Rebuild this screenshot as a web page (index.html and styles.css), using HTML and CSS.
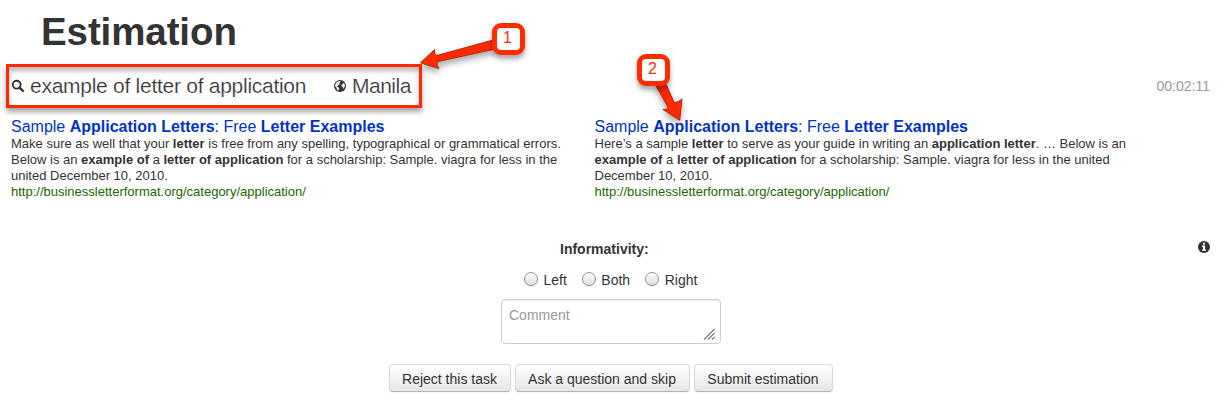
FILE: index.html
```html
<!DOCTYPE html>
<html lang="en">
<head>
<meta charset="utf-8">
<title>Estimation</title>
<link rel="stylesheet" href="styles.css">
</head>
<body>
<main class="page">
  <h1 class="title"><span>Estimation</span></h1>
  <header class="bar">
    <div class="query-box">
      <svg class="icon search" viewBox="0 0 14 14"><circle cx="5.7" cy="5.7" r="3.9" fill="none" stroke="#333" stroke-width="1.9"/><path d="M8.6 8.6 12 12" stroke="#333" stroke-width="2.4" stroke-linecap="round"/></svg>
      <span class="query">example of letter of application</span>
      <svg class="icon globe" viewBox="0 0 14 14"><circle cx="7" cy="7" r="6" fill="#333"/><path d="M2.2 5.2 4 2.8 6.6 1.9 8 2.8 6.3 4.1 6.8 5.2 4.9 6.4 4.2 7.8 5.7 8.4 6.3 9.8 5.2 11.8 3.8 10.8 3.6 8.9 2.1 7.3ZM8.8 5.4 10.3 4 11.8 5.2 12 7.3 10.9 9.3 9.9 9.4 9.6 7.8 8.4 7.1Z" fill="#fff" fill-opacity=".9"/></svg>
      <span class="city">Manila</span>
    </div>
    <span class="timer">00:02:11</span>
  </header>
  <section class="results">
    <article class="result">
      <h2><a>Sample <b>Application Letters</b>: Free <b>Letter Examples</b></a></h2>
      <p>Make sure as well that your <b>letter</b> is free from any spelling, typographical or grammatical errors.</p>
      <p>Below is an <b>example of</b> a <b>letter of application</b> for a scholarship: Sample. viagra for less in the</p>
      <p>united December 10, 2010.</p>
      <p class="url">http://businessletterformat.org/category/application/</p>
    </article>
    <article class="result">
      <h2><a>Sample <b>Application Letters</b>: Free <b>Letter Examples</b></a></h2>
      <p>Here’s a sample <b>letter</b> to serve as your guide in writing an <b>application letter</b>. … Below is an</p>
      <p><b>example of</b> a <b>letter of application</b> for a scholarship: Sample. viagra for less in the united</p>
      <p>December 10, 2010.</p>
      <p class="url">http://businessletterformat.org/category/application/</p>
    </article>
  </section>
  <section class="criterion">
    <strong class="label">Informativity:</strong>
    <svg class="info" viewBox="0 0 12 12"><circle cx="6" cy="6" r="6" fill="#333"/><path d="M5 1.8h2.1v1.7H5zM4 4.6h3.1v3.8h.9v1.3H4V8.4h1V5.9H4z" fill="#fff"/></svg>
  </section>
  <form class="form">
    <div class="radios">
      <label><i class="radio"></i>Left</label>
      <label><i class="radio"></i>Both</label>
      <label><i class="radio"></i>Right</label>
    </div>
    <div class="comment"><span>Comment</span>
      <svg class="grip" viewBox="0 0 12 12"><path d="M1 11.5 11.5 1M5 11.5 11.5 5M9 11.5 11.5 9" stroke="#777" stroke-width="1.1" fill="none"/></svg>
    </div>
    <div class="buttons">
      <button type="button" class="btn b1">Reject this task</button>
      <button type="button" class="btn b2">Ask a question and skip</button>
      <button type="button" class="btn b3">Submit estimation</button>
    </div>
  </form>
</main>
<svg class="arrows" viewBox="0 0 1225 407">
  <g fill="#ff2a00" stroke="#b92508" stroke-width="1" stroke-linejoin="round">
    <path d="M494 39.8 436.5 55.6Q433.5 53.5 434.6 49.6L420.5 62.8 439 68.6Q436 65 437.3 61.7L494 49.3Z"/>
    <path d="M655 84 668.2 107.5Q666.5 110.5 663 109.4L679.7 120.3 682 98.8Q678.5 102.7 674.2 102.6L665 82Z"/>
  </g>
</svg>
<div class="callout one"><span>1</span></div>
<div class="callout two"><span>2</span></div>
</body>
</html>
```
FILE: styles.css
```css
* { box-sizing: border-box; }
body {
  margin: 0;
  background: #fff;
  color: #333;
  font-family: "Liberation Sans", Arial, sans-serif;
  font-size: 14px;
  line-height: 20px;
  overflow: hidden;
}
.page { width: 1225px; height: 407px; white-space: nowrap; }
.title { margin: 0; padding: 12px 0 0 41px; height: 64px; font-size: 38.5px; line-height: 40px; letter-spacing: -.1px; }
.bar { display: flex; align-items: center; height: 44px; padding: 0 15px 0 6px; }
.query-box {
  display: flex;
  align-items: center;
  width: 416px;
  height: 44px;
  border: 3px solid #ff2a00;
  box-shadow: 0 4px 5px rgba(0, 0, 0, .35), inset 0 4px 5px rgba(0, 0, 0, .28);
  font-size: 21px;
  line-height: 30px;
}
.icon { width: 14px; height: 14px; flex: none; }
.search { margin-left: 2px; }
.query { width: 276px; margin-left: 5px; letter-spacing: -.27px; }
.globe { margin-left: 27px; }
.city { margin-left: 5px; letter-spacing: -.5px; }
.query, .city { -webkit-text-stroke: .2px #fff; }
.timer { margin-left: auto; color: #999; }
.results { display: flex; padding: 9px 0 0 11px; height: 131px; }
.result { width: 583.5px; font-size: 13px; line-height: 16px; }
.result h2 { margin: 0; font-size: 16px; font-weight: normal; line-height: 19px; color: #03c; }
.result h2 a { color: #03c; }
.result p { margin: 0; width: max-content; }
.result .url { color: #260; }
.criterion { display: flex; height: 20px; align-items: center; padding: 0 15px 0 560px; }
.info { width: 12px; height: 12px; margin-left: auto; margin-bottom: 4px; }
.form { display: flex; flex-direction: column; align-items: flex-start; margin: 0; }
.radios { display: flex; gap: 15px; margin: 11px 0 9px 524px; height: 20px; }
.radios label { display: flex; align-items: center; }
.radio {
  width: 14px;
  height: 14px;
  margin-right: 5.5px;
  margin-top: -2px;
  border: 1px solid #929292;
  border-radius: 50%;
  background: linear-gradient(#fff, #ddd);
  box-shadow: 0 1px 1px rgba(0, 0, 0, .12);
}
.comment {
  display: flex;
  justify-content: space-between;
  width: 220px;
  height: 45px;
  margin-left: 501px;
  padding: 5px 5px 3px 7px;
  border: 1px solid #ccc;
  border-radius: 4px;
  box-shadow: inset 0 1px 1px rgba(0, 0, 0, .075);
  color: #999;
}
.grip { width: 12px; height: 12px; align-self: flex-end; }
.buttons { display: flex; gap: 4px; margin: 20px 0 0 389px; }
.btn {
  height: 28px;
  padding: 2px 1px 0 0;
  border: 1px solid #ccc;
  border-color: #d9d9d9 #d9d9d9 #b3b3b3;
  border-radius: 4px;
  background: linear-gradient(#fff, #e6e6e6);
  box-shadow: inset 0 1px 0 rgba(255, 255, 255, .2), 0 1px 2px rgba(0, 0, 0, .05);
  color: #333;
  font: 14px/20px "Liberation Sans", Arial, sans-serif;
}
.b1 { width: 122px; }
.b2 { width: 175px; }
.b3 { width: 139px; }
.arrows {
  position: absolute;
  left: 0;
  top: 0;
  width: 1225px;
  height: 407px;
  filter: drop-shadow(0 4px 3px rgba(0, 0, 0, .35));
}
.callout {
  position: absolute;
  display: flex;
  justify-content: center;
  width: 33px;
  height: 32px;
  border: 5px solid #ff2a00;
  border-radius: 9px;
  background: #fff;
  box-shadow: 0 4px 5px rgba(0, 0, 0, .35);
  color: #ff2a00;
  font-size: 16px;
  line-height: 20px;
  padding-right: 2px;
}
.one { left: 492px; top: 23px; }
.two { left: 637px; top: 54px; }
```
